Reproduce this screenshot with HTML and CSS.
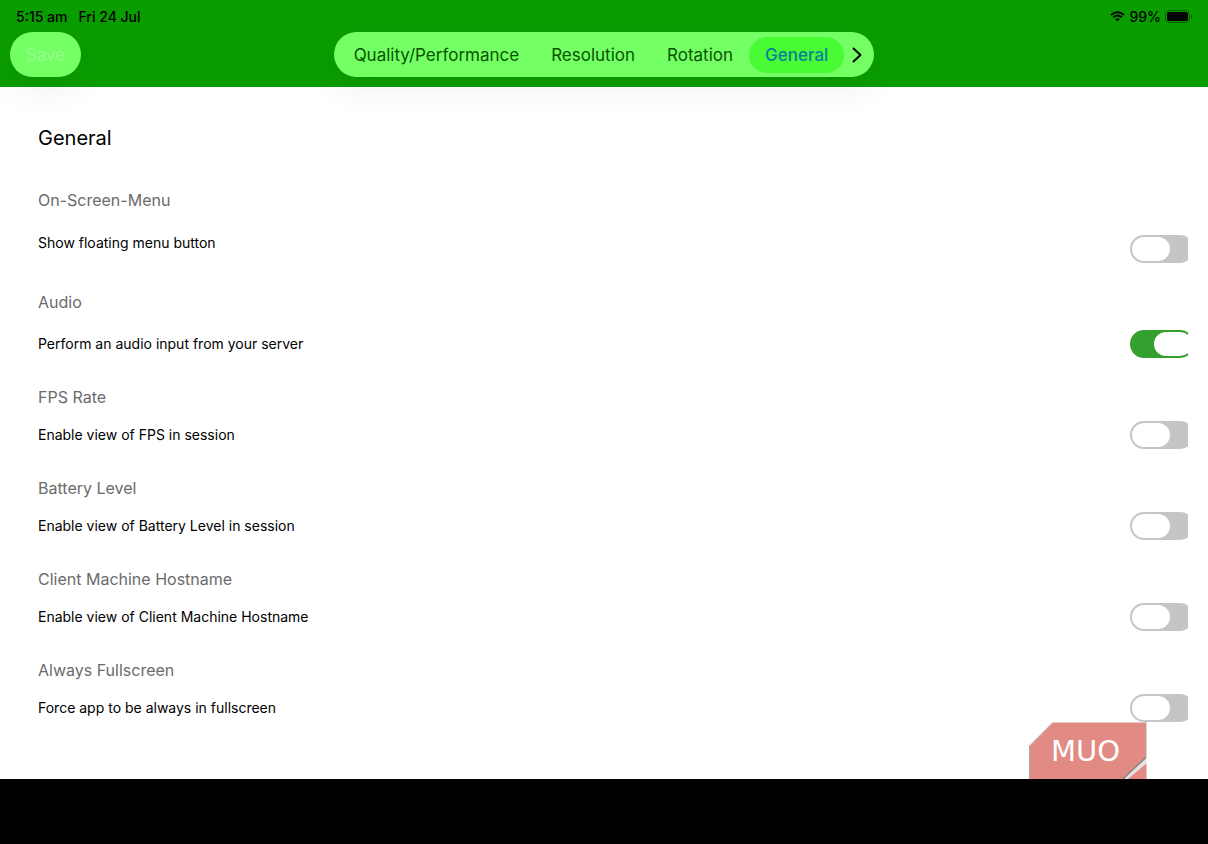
FILE: index.html
```html
<!DOCTYPE html>
<html lang="en">
<head>
    <meta charset="UTF-8">
    <meta name="viewport" content="width=device-width, initial-scale=1.0">
    <title>General</title>
    <link rel="stylesheet" href="styles.css">
</head>
<body>
    <header class="app-bar">
        <div class="status-bar">
            <span>5:15 am</span>
            <span>Fri 24 Jul</span>
            <div class="status-right">
                <svg width="15" height="11" viewBox="0 0 15 11" aria-hidden="true">
                    <path d="M1 4 Q7.5 -1.5 14 4 M3.3 6.3 Q7.5 2.7 11.7 6.3" fill="none" stroke="#000" stroke-width="1.9"/>
                    <path d="M7.5 10.5 L5.2 8.2 Q7.5 6.2 9.8 8.2 Z"/>
                </svg>
                <span>99%</span>
                <svg width="28" height="13" viewBox="0 0 28 13" aria-hidden="true">
                    <rect x="0.5" y="0.5" width="24" height="12" rx="4" fill="none" stroke="#000" stroke-opacity="0.4"/>
                    <rect x="2" y="2" width="21" height="9" rx="2.5"/>
                    <path d="M26 4.5 Q28 6.5 26 8.5 Z" fill-opacity="0.5"/>
                </svg>
            </div>
        </div>
        <div class="toolbar">
            <button type="button" class="save-button" disabled>Save</button>
            <nav class="tabs">
                <button type="button" class="tab">Quality/Performance</button>
                <button type="button" class="tab">Resolution</button>
                <button type="button" class="tab">Rotation</button>
                <button type="button" class="tab active">General</button>
                <button type="button" class="more" aria-label="More">
                    <svg width="10" height="16" viewBox="0 0 10 16" aria-hidden="true">
                        <path d="M1.5 1.5 L8.5 8 L1.5 14.5" fill="none" stroke="#000" stroke-width="2" stroke-linecap="round" stroke-linejoin="round"/>
                    </svg>
                </button>
            </nav>
        </div>
    </header>

    <main class="settings">
        <h1>General</h1>
        <section class="setting loose">
            <h2>On-Screen-Menu</h2>
            <div class="row">
                <label for="menuButton">Show floating menu button</label>
                <span class="switch"><input type="checkbox" id="menuButton"></span>
            </div>
        </section>
        <section class="setting medium">
            <h2>Audio</h2>
            <div class="row">
                <label for="audio">Perform an audio input from your server</label>
                <span class="switch"><input type="checkbox" id="audio" checked></span>
            </div>
        </section>
        <section class="setting">
            <h2>FPS Rate</h2>
            <div class="row">
                <label for="fps">Enable view of FPS in session</label>
                <span class="switch"><input type="checkbox" id="fps"></span>
            </div>
        </section>
        <section class="setting">
            <h2>Battery Level</h2>
            <div class="row">
                <label for="battery">Enable view of Battery Level in session</label>
                <span class="switch"><input type="checkbox" id="battery"></span>
            </div>
        </section>
        <section class="setting">
            <h2>Client Machine Hostname</h2>
            <div class="row">
                <label for="hostname">Enable view of Client Machine Hostname</label>
                <span class="switch"><input type="checkbox" id="hostname"></span>
            </div>
        </section>
        <section class="setting">
            <h2>Always Fullscreen</h2>
            <div class="row">
                <label for="fullscreen">Force app to be always in fullscreen</label>
                <span class="switch"><input type="checkbox" id="fullscreen"></span>
            </div>
        </section>
        <div class="badge">
            <svg width="118" height="57" viewBox="0 0 118 57" aria-hidden="true">
                <path d="M0.5 57 V24 L24 0.5 H117 V36 L95 57 Z" fill="#e28b84"/>
                <path d="M0.5 57 V24 L24 0.5 M117 0 V36" fill="none" stroke="#b5a5a5"/>
                <path d="M116.5 36 L94 57" stroke="#8f8582" stroke-width="2"/>
                <path d="M117 38.5 L97 57" stroke="#e4e2e0" stroke-width="3"/>
                <path d="M99 57 L117.5 41 V57 Z" fill="#e28b84"/>
            </svg>
            <span>MUO</span>
        </div>
    </main>
</body>
</html>
```

FILE: styles.css
```css
* {
    box-sizing: border-box;
}
body {
    font-family: Inter, 'Liberation Sans', sans-serif;
    margin: 0;
    min-height: 100vh;
    background-color: #000000;
    color: #000000;
}
button {
    font: inherit;
    border: none;
    padding: 0;
    background: none;
}
.app-bar {
    position: relative;
    z-index: 1;
    height: 87px;
    background-color: #0a9d00;
}
.status-bar {
    display: flex;
    align-items: center;
    gap: 11px;
    height: 32px;
    padding: 0 15px 0 16px;
    font-size: 14px;
    font-weight: 500;
}
.status-right {
    display: flex;
    align-items: center;
    gap: 4px;
    margin-left: auto;
}
.toolbar {
    display: grid;
    grid-template-columns: 1fr auto 1fr;
    padding: 0 10px;
    font-size: 17px;
    font-weight: 400;
}
.save-button {
    width: 71px;
    height: 45px;
    border-radius: 23px;
    background-color: #74ff65;
    color: #98ff8c;
    box-shadow: 0 8px 36px rgba(0, 0, 0, 0.08);
}
.tabs {
    display: flex;
    align-items: center;
    height: 45px;
    padding: 0 12px 0 4px;
    border-radius: 23px;
    background-color: #74ff65;
    box-shadow: 0 8px 36px rgba(0, 0, 0, 0.08);
}
.tab {
    height: 36px;
    padding: 0 16px;
    border-radius: 18px;
    color: #075500;
}
.tab.active {
    background-color: #48fb35;
    color: #078399;
    font-weight: 500;
}
.more {
    display: flex;
    margin-left: 8px;
}
.settings {
    position: relative;
    padding: 38px 20px 57px 38px;
    background-color: #ffffff;
}
h1 {
    margin: 0 0 37px;
    font-size: 20px;
    line-height: 26px;
    font-weight: 400;
}
h2 {
    margin: 0 0 12px;
    font-size: 16px;
    line-height: 24px;
    font-weight: 400;
    color: #6b6b6b;
}
.setting + .setting {
    margin-top: 27px;
}
.loose h2 {
    margin-bottom: 23px;
}
.medium h2 {
    margin-bottom: 16px;
}
.row {
    display: flex;
    align-items: center;
    justify-content: space-between;
    font-size: 14px;
    line-height: 16px;
}
.loose .row {
    align-items: flex-start;
}
.switch {
    width: 58px;
    height: 28px;
    overflow: hidden;
}
.switch input {
    appearance: none;
    display: block;
    width: 64px;
    height: 28px;
    margin: 0;
    padding: 2px;
    border-radius: 14px;
    background-color: #c5c5c7;
}
.switch input::before {
    content: "";
    display: block;
    width: 38px;
    height: 24px;
    border-radius: 12px;
    background-color: #ffffff;
}
.switch input:checked {
    background-color: #35a02d;
}
.switch input:checked::before {
    margin-left: auto;
}
.badge {
    position: absolute;
    right: 61px;
    bottom: 0;
    height: 57px;
}
.badge span {
    position: absolute;
    left: 22px;
    top: 13px;
    font-family: 'DejaVu Sans', sans-serif;
    font-size: 29px;
    line-height: 32px;
    color: #ffffff;
}
```
